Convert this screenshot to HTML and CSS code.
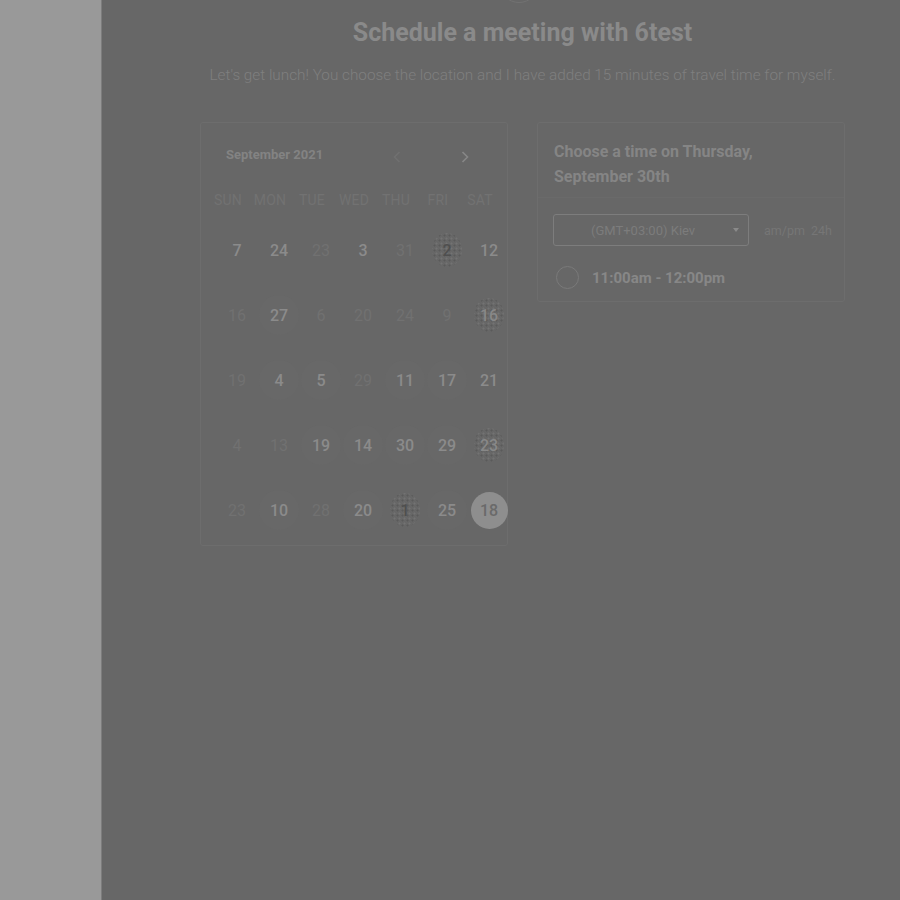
FILE: index.html
```html
<!DOCTYPE html>
<html>
<head>
<meta charset="utf-8">
<link rel="stylesheet" href="styles.css">
</head>
<body>
<div class="page">
  <aside class="side"></aside>
  <main class="main">
    <div class="avatar"></div>
    <h1 class="title">Schedule a meeting with 6test</h1>
    <p class="subtitle">Let's get lunch! You choose the location and I have added 15 minutes of travel time for myself.</p>
    <div class="cards">
      <section class="card cal">
        <div class="cal-head">
          <span class="month">September 2021</span>
          <span class="arrow prev"><svg width="8" height="12" viewBox="0 0 8 12"><path d="M6.5 1 L1.5 6 L6.5 11" fill="none" stroke="currentColor" stroke-width="1.6"/></svg></span>
          <span class="arrow next"><svg width="8" height="12" viewBox="0 0 8 12"><path d="M1.5 1 L6.5 6 L1.5 11" fill="none" stroke="currentColor" stroke-width="1.6"/></svg></span>
        </div>
        <div class="weekdays">
          <span>SUN</span><span>MON</span><span>TUE</span><span>WED</span><span>THU</span><span>FRI</span><span>SAT</span>
        </div>
        <div class="days">
          <span class="d on">7</span><span class="d on">24</span><span class="d off">23</span><span class="d on">3</span><span class="d off">31</span><span class="d dot dark">2</span><span class="d on">12</span>
          <span class="d off">16</span><span class="d on ring">27</span><span class="d off">6</span><span class="d off">20</span><span class="d off">24</span><span class="d off">9</span><span class="d dot">16</span>
          <span class="d off">19</span><span class="d on ring">4</span><span class="d on ring">5</span><span class="d off">29</span><span class="d on ring">11</span><span class="d on ring">17</span><span class="d on">21</span>
          <span class="d off">4</span><span class="d off">13</span><span class="d on ring">19</span><span class="d on ring">14</span><span class="d on ring">30</span><span class="d on ring">29</span><span class="d dot">23</span>
          <span class="d off">23</span><span class="d on ring">10</span><span class="d off">28</span><span class="d on ring">20</span><span class="d dot dark">1</span><span class="d on ring">25</span><span class="d sel">18</span>
        </div>
      </section>
      <section class="card times">
        <h2 class="times-title">Choose a time on Thursday, September 30th</h2>
        <div class="tz-row">
          <div class="select">
            <span class="select-text">(GMT+03:00) Kiev</span>
            <span class="caret"></span>
          </div>
          <div class="fmt"><span>am/pm</span><span>24h</span></div>
        </div>
        <div class="slot">
          <span class="radio"></span>
          <span class="slot-text">11:00am - 12:00pm</span>
        </div>
      </section>
    </div>
  </main>
</div>
</body>
</html>
```

FILE: styles.css
```css
* { box-sizing: border-box; }
html, body { margin: 0; padding: 0; }
body {
  background: #676767;
  font-family: Roboto, "Liberation Sans", Arial, sans-serif;
  overflow: hidden;
}
.page {
  display: flex;
  height: 900px;
}
.side {
  width: 102px;
  flex: none;
  background: #999999;
  border-right: 1px solid #7d7d7d;
}
.main {
  flex: 1;
  padding: 0 55px 0 98px;
  display: flex;
  flex-direction: column;
}
.avatar {
  width: 40px;
  height: 40px;
  border-radius: 50%;
  border: 1px solid #727272;
  margin: -37px auto 0;
  position: relative;
  left: -4px;
}
.title {
  margin: 15px 0 0;
  text-align: center;
  font-size: 25px;
  line-height: 30px;
  font-weight: 700;
  color: #8a8a8a;
}
.subtitle {
  margin: 17px 0 0;
  text-align: center;
  font-size: 15.3px;
  line-height: 20px;
  font-weight: 300;
  color: #7f7f7f;
}
.cards {
  display: flex;
  gap: 29px;
  align-items: flex-start;
  margin-top: 37px;
}
.card {
  width: 308px;
  border: 1px solid #6d6d6d;
  border-radius: 3px;
}
.cal {
  height: 424px;
  padding: 23px 0 0 6px;
}
.cal-head {
  display: flex;
  align-items: center;
  height: 16px;
  padding-left: 19px;
}
.month {
  font-size: 13px;
  font-weight: 700;
  color: #838383;
  width: 167px;
}
.arrow { display: flex; align-items: center; height: 12px; margin-top: 6px; }
.prev { color: #707070; }
.next { color: #878787; margin-left: 60px; }
.weekdays {
  display: grid;
  grid-template-columns: repeat(7, 42px);
  margin-top: 23px;
  height: 30px;
  align-items: center;
  text-align: center;
  font-size: 14px;
  color: #727272;
  letter-spacing: 0.2px;
}
.days {
  display: grid;
  grid-template-columns: repeat(7, 42px);
  grid-auto-rows: 65px;
  margin-top: 3px;
  margin-left: 9px;
  position: relative;
  z-index: 1;
}
.d {
  display: flex;
  align-items: center;
  justify-content: center;
  font-size: 16px;
  font-weight: 500;
  position: relative;
}
.on { color: #8b8b8b; }
.off { color: #717171; font-weight: 400; }
.ring::before {
  content: "";
  position: absolute;
  width: 40px;
  height: 40px;
  border-radius: 50%;
  background: #686868;
  left: 1px;
  top: 12px;
  z-index: -1;
}
.dot { color: #888888; }
.dot.dark { color: #4f4f4f; }
.dot::before {
  content: "";
  position: absolute;
  width: 30px;
  height: 34px;
  border-radius: 50%;
  left: 6px;
  top: 15px;
  background-image:
    radial-gradient(circle, #5a5a5a 0.8px, transparent 1.2px),
    radial-gradient(circle, #737373 0.8px, transparent 1.2px);
  background-size: 5px 5px, 5px 5px;
  background-position: 0 0, 2px 3px;
  z-index: -1;
}
.sel {
  color: #6a6a6a;
  font-weight: 500;
}
.sel::before {
  content: "";
  position: absolute;
  width: 37px;
  height: 37px;
  border-radius: 50%;
  background: #8e8e8e;
  left: 3px;
  top: 14px;
  z-index: -1;
}
.times {
  height: 180px;
}
.times-title {
  margin: 0;
  padding: 16px 60px 8px 16px;
  font-size: 16px;
  line-height: 25px;
  font-weight: 700;
  color: #858585;
  border-bottom: 1px solid #6a6a6a;
}
.tz-row {
  display: flex;
  align-items: center;
  margin-top: 16px;
  padding-left: 15px;
}
.select {
  width: 196px;
  height: 32px;
  border: 1px solid #7d7d7d;
  border-radius: 3px;
  display: flex;
  align-items: center;
  padding-left: 37px;
  font-size: 13px;
  color: #7c7c7c;
}
.select-text { width: 142px; }
.caret {
  width: 0;
  height: 0;
  border-left: 3.5px solid transparent;
  border-right: 3.5px solid transparent;
  border-top: 4px solid #8a8a8a;
}
.fmt {
  display: flex;
  gap: 6px;
  margin-left: 15px;
  font-size: 12.5px;
  color: #767676;
}
.slot {
  display: flex;
  align-items: center;
  margin-top: 20px;
  padding-left: 18px;
}
.radio {
  width: 23px;
  height: 23px;
  border-radius: 50%;
  border: 1px solid #7a7a7a;
}
.slot-text {
  margin-left: 13px;
  font-size: 15px;
  font-weight: 700;
  color: #878787;
}
```
